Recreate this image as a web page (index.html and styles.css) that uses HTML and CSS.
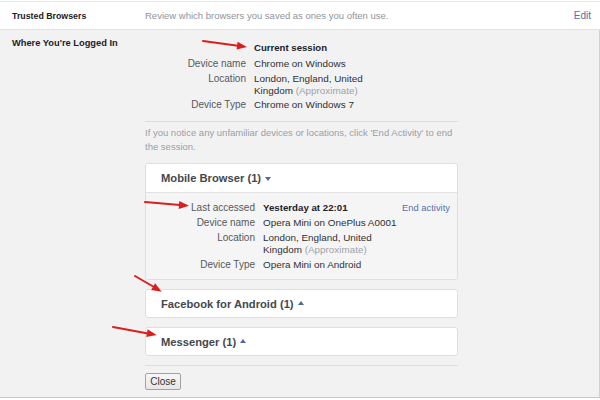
FILE: index.html
```html
<!DOCTYPE html>
<html lang="en">
<head>
<meta charset="utf-8">
<title>Security Settings</title>
<link rel="stylesheet" href="styles.css">
</head>
<body>
<div class="page">
  <div class="row-top">
    <div class="title-sm">Trusted Browsers</div>
    <div class="desc">Review which browsers you saved as ones you often use.</div>
    <a class="edit" href="#">Edit</a>
  </div>
  <div class="row-logged">
    <div class="title-lg">Where You're Logged In</div>
    <div class="content">
      <div class="kv current">
        <div class="kv-head">Current session</div>
        <div class="lbl">Device name</div><div class="val">Chrome on Windows</div>
        <div class="lbl">Location</div><div class="val">London, England, United<br>Kingdom <span class="approx">(Approximate)</span></div>
        <div class="lbl">Device Type</div><div class="val">Chrome on Windows 7</div>
      </div>
      <div class="sep"></div>
      <p class="note">If you notice any unfamiliar devices or locations, click 'End Activity' to end the session.</p>
      <div class="card">
        <div class="card-head">Mobile Browser (1)<span class="tri down"></span></div>
        <div class="card-body">
          <div class="lbl">Last accessed</div><div class="val strong">Yesterday at 22:01</div><a class="end" href="#">End activity</a>
          <div class="lbl">Device name</div><div class="val">Opera Mini on OnePlus A0001</div><div></div>
          <div class="lbl">Location</div><div class="val">London, England, United<br>Kingdom <span class="approx">(Approximate)</span></div><div></div>
          <div class="lbl">Device Type</div><div class="val">Opera Mini on Android</div><div></div>
        </div>
      </div>
      <div class="card">
        <div class="card-head short">Facebook for Android (1)<span class="tri up"></span></div>
      </div>
      <div class="card">
        <div class="card-head short">Messenger (1)<span class="tri up"></span></div>
      </div>
      <div class="sep sep-bottom"></div>
      <button class="close" type="button">Close</button>
    </div>
  </div>
  <svg class="arrows" width="600" height="400" viewBox="0 0 600 400">
    <g stroke="#d91f1f" stroke-width="2" stroke-linecap="round" fill="none">
      <line x1="203" y1="41" x2="238" y2="45.8"/>
      <line x1="145" y1="202" x2="180" y2="205"/>
      <line x1="135" y1="276" x2="154" y2="287"/>
      <line x1="113" y1="327" x2="148" y2="333.5"/>
    </g>
    <g fill="#d91f1f">
      <polygon points="247,47 236.6,49.6 237.6,41.7"/>
      <polygon points="189,205.7 178.7,208.9 179.3,200.9"/>
      <polygon points="161.7,291.7 151.1,290 155.1,283.2"/>
      <polygon points="156.7,335 146.2,337.1 147.6,329.3"/>
    </g>
  </svg>
</div>
</body>
</html>
```
FILE: styles.css
```css
* { box-sizing: border-box; }
html, body { margin: 0; padding: 0; background: #fff; }
body { font-family: "Liberation Sans", Arial, sans-serif; color: #1d2129; }

.page {
  position: relative;
  width: 600px;
  height: 400px;
  padding-top: 1px;
  overflow: hidden;
}

.row-top {
  display: grid;
  grid-template-columns: 133px 1fr auto;
  align-items: center;
  height: 29px;
  padding: 0 9px 0 12px;
  border-top: 1px solid #e9e9e9;
  border-bottom: 1px solid #e2e2e2;
  background: #fff;
}
.title-sm { font-weight: bold; font-size: 8.8px; color: #1d2129; }
.desc { font-size: 9.5px; color: #90949c; }
.edit { font-size: 10px; color: #5570a8; text-decoration: none; }

.row-logged {
  display: grid;
  grid-template-columns: 133px 313px;
  align-items: start;
  padding: 0 0 7px 12px;
  background: #f2f2f2;
  border-right: 1px solid #d0d0d0;
  border-bottom: 1px solid #c8c8c8;
}
.title-lg {
  font-weight: bold;
  font-size: 9.3px;
  line-height: 12px;
  padding-top: 7px;
  color: #1d2129;
}
.content { padding-top: 12px; }

.kv { display: grid; line-height: 12px; }
.current {
  grid-template-columns: 101px auto;
  column-gap: 8px;
  row-gap: 2.5px;
  justify-content: start;
}
.kv-head {
  grid-column: 2;
  font-weight: bold;
  font-size: 9.6px;
  color: #1d2129;
  margin-bottom: 1.5px;
}
.lbl { text-align: right; font-size: 10px; color: #55585e; }
.val { font-size: 9.9px; color: #2e3035; white-space: nowrap; }
.val.strong { font-weight: bold; font-size: 9.7px; color: #1d2129; }
.approx { color: #a0a3a8; }

.sep { height: 1px; background: #dcdcdc; margin-top: 10px; }
.note {
  margin: 4px 0 9px;
  font-size: 9.5px;
  line-height: 14px;
  color: #9a9ea6;
}

.card {
  background: #fff;
  border: 1px solid #dddfe2;
  border-radius: 3px;
  margin-bottom: 9px;
}
.card-head {
  display: flex;
  align-items: center;
  height: 28px;
  padding-left: 15px;
  font-weight: bold;
  font-size: 11.2px;
  color: #44474d;
}
.card-head.short { height: 27px; }
.tri {
  width: 0;
  height: 0;
  margin-left: 4px;
  border-left: 3.5px solid transparent;
  border-right: 3.5px solid transparent;
}
.tri.down { border-top: 4px solid #4d68a3; margin-top: 2px; }
.tri.up { border-bottom: 4px solid #4d68a3; margin-top: -1px; }

.card-body {
  display: grid;
  grid-template-columns: 109px minmax(0, 1fr) auto;
  column-gap: 8px;
  row-gap: 3px;
  line-height: 12px;
  padding: 9px 7px 8px 0;
  background: #f5f5f5;
  border-top: 1px solid #e3e3e3;
  border-radius: 0 0 3px 3px;
}
.end {
  white-space: nowrap;
  font-size: 9.4px;
  color: #5570a8;
  text-decoration: none;
}

.sep-bottom { margin-top: 0; margin-bottom: 7px; }

.close {
  display: block;
  width: 36px;
  height: 17px;
  padding: 0;
  font-family: "Liberation Sans", Arial, sans-serif;
  font-size: 10px;
  color: #333;
  background: linear-gradient(#f7f7f7, #e6e6e6);
  border: 1px solid #a3a3a3;
  border-radius: 2px;
}

.arrows {
  position: absolute;
  top: 0;
  left: 0;
  pointer-events: none;
}
```
